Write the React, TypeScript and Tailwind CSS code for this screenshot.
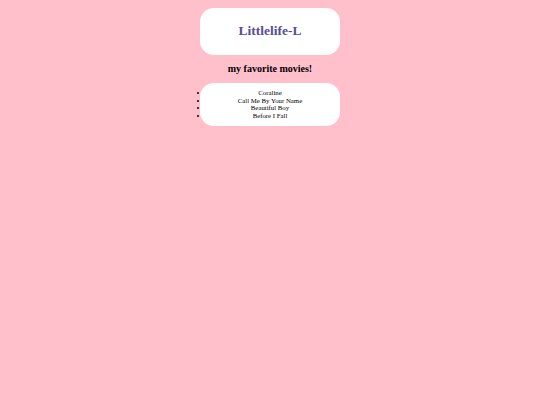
import React from "react";

const movies = ["Coraline", "Call Me By Your Name", "Beautiful Boy", "Before I Fall"];

const App: React.FC = () => {
  return (
    <div className="min-h-[405px] w-full bg-[#ffc0cb] font-['Liberation_Serif',serif] text-black">
      <div className="flex flex-col items-center pt-2">
        {/* Title card */}
        <div className="flex h-[47px] w-[140px] items-center justify-center rounded-[14px] bg-white">
          <h1 className="text-[13.5px] font-bold text-[#574c9c]">Littlelife-L</h1>
        </div>

        <h2 className="mt-[8px] text-[10px] leading-[12px] font-bold">my favorite movies!</h2>

        {/* Movie list */}
        <ul className="mt-[8px] w-[140px] list-disc rounded-[14px] bg-white px-[8px] pt-[6px] pb-[7px] text-center text-[6.8px] leading-[7.6px] [list-style-position:outside] marker:text-black">
          {movies.map((m) => (
            <li key={m}>{m}</li>
          ))}
        </ul>
      </div>
    </div>
  );
};

export default App;
